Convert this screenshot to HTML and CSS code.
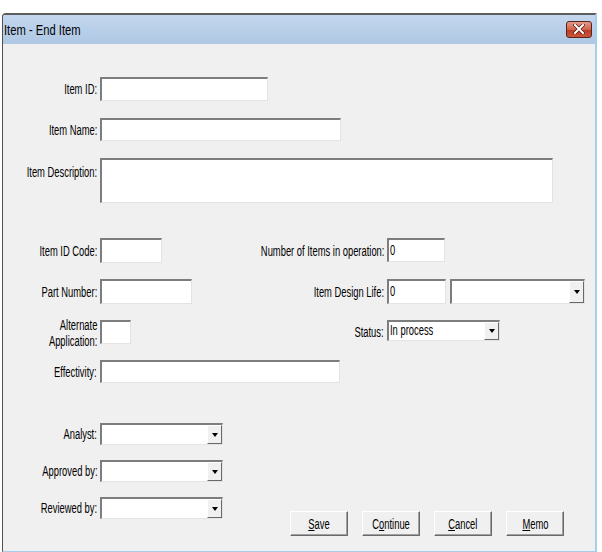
FILE: index.html
```html
<!DOCTYPE html>
<html>
<head>
<meta charset="utf-8">
<link rel="stylesheet" href="styles.css">
</head>
<body>
<div class="window">
  <div class="titlebar">
    <span class="title"><span class="sq">Item - End Item</span></span>
    <span class="close"><svg width="12" height="10" viewBox="0 0 12 10"><path d="M2 1 L10 9 M10 1 L2 9" stroke="#5a1a10" stroke-width="3.4" stroke-linecap="square"/><path d="M2 1 L10 9 M10 1 L2 9" stroke="#ffffff" stroke-width="2" stroke-linecap="square"/></svg></span>
  </div>
  <div class="client">
    <div class="sec-top">
      <label class="lbl"><span class="sq">Item ID:</span></label><div class="field f-id"></div>
      <label class="lbl"><span class="sq">Item Name:</span></label><div class="field f-name"></div>
      <label class="lbl lbl-top"><span class="sq">Item Description:</span></label><div class="field f-desc"></div>
    </div>

    <div class="sec-mid">
      <label class="lbl"><span class="sq">Item ID Code:</span></label><div class="field f-code"></div>
      <label class="lbl"><span class="sq">Number of Items in operation:</span></label><div class="field f-num"><span class="val"><span class="sq">0</span></span></div>

      <label class="lbl"><span class="sq">Part Number:</span></label><div class="field f-part"></div>
      <label class="lbl"><span class="sq">Item Design Life:</span></label>
      <div class="pair">
        <div class="field f-life"><span class="val"><span class="sq">0</span></span></div>
        <div class="combo c-life"><span class="ctext"></span><span class="cbtn"><i class="tri"></i></span></div>
      </div>

      <label class="lbl two"><span class="sq">Alternate<br>Application:</span></label><div class="field f-alt"></div>
      <label class="lbl lbl-st"><span class="sq">Status:</span></label>
      <div class="combo c-status"><span class="ctext"><span class="sq">In process</span></span><span class="cbtn"><i class="tri"></i></span></div>

      <label class="lbl"><span class="sq">Effectivity:</span></label><div class="field f-eff"></div>
    </div>

    <div class="sec-bot">
      <div class="people">
        <label class="lbl"><span class="sq">Analyst:</span></label><div class="combo c-person"><span class="ctext"></span><span class="cbtn"><i class="tri"></i></span></div>
        <label class="lbl"><span class="sq">Approved by:</span></label><div class="combo c-person"><span class="ctext"></span><span class="cbtn"><i class="tri"></i></span></div>
        <label class="lbl"><span class="sq">Reviewed by:</span></label><div class="combo c-person"><span class="ctext"></span><span class="cbtn"><i class="tri"></i></span></div>
      </div>
      <div class="buttons">
        <button class="btn"><span class="sq"><u>S</u>ave</span></button>
        <button class="btn"><span class="sq">C<u>o</u>ntinue</span></button>
        <button class="btn"><span class="sq"><u>C</u>ancel</span></button>
        <button class="btn"><span class="sq"><u>M</u>emo</span></button>
      </div>
    </div>
  </div>
</div>
</body>
</html>
```

FILE: styles.css
```css
html, body {
  margin: 0;
  padding: 0;
  background: #ffffff;
}
body {
  padding-top: 13px;
  font-family: "Liberation Sans", Arial, sans-serif;
  font-size: 14px;
  color: #000;
}
.sq {
  display: inline-block;
  transform: scaleX(0.67);
  transform-origin: left center;
  white-space: nowrap;
}
.window {
  margin-left: 2px;
  width: 592px;
  height: 536px;
  border-top: 2px solid #5c5c5c;
  border-left: 1px solid #505050;
  border-right: 2px solid #a6cdec;
  border-bottom: 1px solid #a6cdec;
  border-top-left-radius: 4px;
  display: flex;
  flex-direction: column;
  overflow: hidden;
}
.titlebar {
  height: 29px;
  flex: none;
  display: flex;
  align-items: center;
  justify-content: space-between;
  padding: 0 3px 0 1px;
  background: linear-gradient(#c3d7ee, #aec7e3);
}
.title {
  font-size: 14px;
  color: #000;
}
.title .sq {
  transform: scaleX(0.8);
}
.close {
  width: 24px;
  height: 15px;
  margin-top: -1px;
  border: 1px solid #5b2218;
  border-radius: 3px;
  background: linear-gradient(#e39a8a, #d0624c 50%, #b83c25 51%, #c9553c);
  display: flex;
  align-items: center;
  justify-content: center;
}
.client {
  flex: 1;
  background: #f0f0f0;
  padding-top: 33px;
}
.lbl {
  text-align: right;
  align-self: center;
  line-height: 14px;
  white-space: nowrap;
}
.lbl .sq {
  transform-origin: right center;
  text-align: right;
}
.lbl.two {
  line-height: 16px;
  margin-top: 2px;
}
.lbl-top {
  align-self: start;
  padding-top: 7px;
}
.field, .combo {
  box-sizing: border-box;
  background: #fff;
  border-style: solid;
  border-width: 2px 1px 1px 2px;
  border-color: #7d7d7d #e3e3e3 #e3e3e3 #7d7d7d;
}
.val {
  display: block;
  padding: 2px 0 0 1px;
  line-height: 16px;
}

.sec-top {
  display: grid;
  grid-template-columns: 94px auto;
  grid-template-rows: 24px 23px 45px;
  column-gap: 3px;
  row-gap: 17px;
  justify-items: start;
}
.sec-top .lbl { justify-self: end; }
.f-id { width: 168px; height: 24px; }
.f-name { width: 241px; height: 23px; }
.f-desc { width: 453px; height: 45px; }

.sec-mid {
  margin-top: 35px;
  display: grid;
  grid-template-columns: 94px 140px 141px auto;
  grid-template-rows: 25px 25px 24px 23px;
  column-gap: 3px;
  row-gap: 16px;
  justify-items: start;
}
.sec-mid .lbl { justify-self: end; }
.f-code { width: 62px; height: 25px; }
.f-num { width: 58px; height: 24px; }
.f-part { width: 92px; height: 25px; }
.pair { display: flex; gap: 4px; }
.f-life { width: 59px; height: 25px; }
.c-life { width: 135px; height: 25px; }
.f-alt { width: 31px; height: 24px; }
.lbl-st { align-self: center; }
.c-status { width: 113px; height: 21px; align-self: start; }
.f-eff { width: 240px; height: 23px; grid-column: 2 / span 3; }

.combo {
  display: flex;
}
.ctext {
  flex: 1;
  padding-left: 1px;
  line-height: 17px;
  overflow: hidden;
  white-space: nowrap;
}
.cbtn {
  width: 15px;
  flex: none;
  box-sizing: border-box;
  background: #f0f0f0;
  border-style: solid;
  border-width: 1px;
  border-color: #ffffff #696969 #696969 #ffffff;
  display: flex;
  align-items: center;
  justify-content: center;
}
.tri {
  display: block;
  width: 0;
  height: 0;
  border-left: 3.5px solid transparent;
  border-right: 3.5px solid transparent;
  border-top: 4px solid #000;
}

.sec-bot {
  margin-top: 40px;
  display: flex;
  align-items: flex-end;
}
.people {
  display: grid;
  grid-template-columns: 94px 123px;
  grid-template-rows: 22px 22px 22px;
  column-gap: 3px;
  row-gap: 15px;
  padding-bottom: 17px;
}
.people .lbl { justify-self: end; }
.c-person { width: 123px; height: 22px; }
.buttons {
  margin-left: 67px;
  display: flex;
  gap: 14px;
}
.btn {
  width: 58px;
  height: 25px;
  box-sizing: border-box;
  padding: 0;
  font-family: inherit;
  font-size: 14px;
  color: #000;
  background: #f0f0f0;
  border-style: solid;
  border-width: 1px;
  border-color: #ffffff #696969 #696969 #ffffff;
  box-shadow: inset -1px -1px 0 #a0a0a0;
}
.btn .sq {
  transform-origin: center center;
}
```
